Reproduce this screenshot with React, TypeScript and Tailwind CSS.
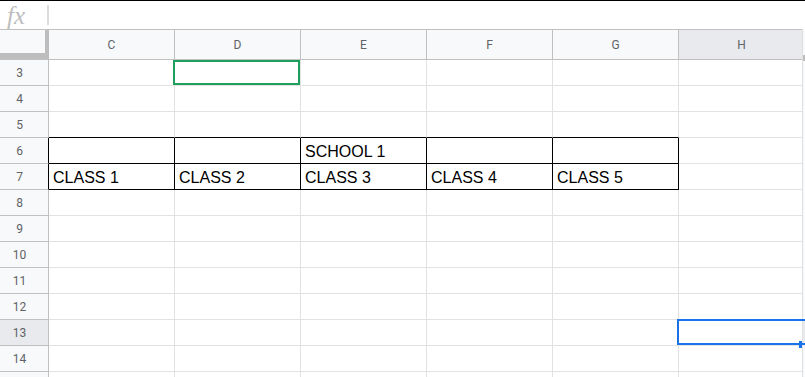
import React from "react";

const cols = ["C", "D", "E", "F", "G", "H"];
const rows = [3, 4, 5, 6, 7, 8, 9, 10, 11, 12, 13, 14, 15];
const tableCols = ["C", "D", "E", "F", "G"];

const cellText: Record<string, string> = {
  "E6": "SCHOOL 1",
  "C7": "CLASS 1",
  "D7": "CLASS 2",
  "E7": "CLASS 3",
  "F7": "CLASS 4",
  "G7": "CLASS 5",
};

const headerFont = { fontFamily: "Roboto, 'Noto Sans', Arial, sans-serif" };
const cellFont = { fontFamily: "'Liberation Sans', Arial, sans-serif" };

function BodyCell({ col, row }: { col: string; row: number }) {
  const inTable = tableCols.includes(col);
  const blackRight = inTable && (row === 6 || row === 7);
  const blackBottom = inTable && (row === 5 || row === 6 || row === 7);
  const text = cellText[col + row];
  return (
    <div
      className={
        "w-[126px] h-full shrink-0 bg-white border-r border-b " +
        (blackRight ? "border-r-black " : "border-r-[#e2e2e2] ") +
        (blackBottom ? "border-b-black" : "border-b-[#e2e2e2]")
      }
    >
      {text ? (
        <div
          className="pl-[4px] pt-[2px] leading-[23px] text-[16px] text-black whitespace-nowrap"
          style={cellFont}
        >
          {text}
        </div>
      ) : null}
    </div>
  );
}

export default function App() {
  return (
    <div className="relative w-[805px] h-[377px] overflow-hidden bg-white">
      {/* formula bar */}
      <div className="h-[29px] border-t border-black flex items-center">
        <span
          className="ml-[7px] mt-[1px] text-[25px] italic leading-none text-[#bdbdbd] w-[31px]"
          style={{ fontFamily: "'Liberation Serif', 'DejaVu Serif', serif" }}
        >
          fx
        </span>
        <div className="ml-[9px] w-[2px] h-[20px] bg-[#dadce0]" />
      </div>

      {/* column header row */}
      <div className="flex h-[31px] border-t border-b border-[#c0c0c0]">
        <div className="w-[49px] h-full shrink-0 bg-[#f8f9fa] border-r-[4px] border-b-[6px] border-[#bdbdbd]" />
        {cols.map((c) => (
          <div
            key={c}
            className={
              "w-[126px] h-full shrink-0 flex items-center justify-center border-r border-[#c0c0c0] text-[12px] text-[#5f6368] " +
              (c === "H" ? "bg-[#e8eaed]" : "bg-[#f8f9fa]")
            }
            style={headerFont}
          >
            {c}
          </div>
        ))}
      </div>

      {/* body rows */}
      {rows.map((r) => (
        <div key={r} className="flex h-[26px]">
          <div
            className={
              "w-[49px] h-full shrink-0 flex items-center justify-center pr-[9px] border-r border-b border-b-[#c0c0c0] text-[12px] text-[#5f6368] " +
              (r === 6 || r === 7 ? "border-r-black " : "border-r-[#c0c0c0] ") +
              (r === 13 ? "bg-[#e8eaed]" : "bg-[#f8f9fa]")
            }
            style={headerFont}
          >
            {r < 15 ? r : ""}
          </div>
          {cols.map((c) => (
            <BodyCell key={c} col={c} row={r} />
          ))}
        </div>
      ))}

      {/* right scrollbar strip */}
      <div className="absolute right-0 top-[29px] bottom-0 w-[3px] bg-[#f8f9fa] border-l border-[#e0e0e0]">
        <div className="absolute left-0 right-0 top-[26px] h-[6px] bg-[#bdbdbd]" />
        <div className="absolute left-0 right-0 top-[291px] h-[26px] bg-[#e8eaed]" />
      </div>

      {/* green selection (D3) */}
      <div className="absolute left-[173px] top-[60px] w-[127px] h-[25px] border-2 border-[#1e9f5b]" />

      {/* blue selection (H13) */}
      <div className="absolute left-[677px] top-[319px] w-[130px] h-[26px] border-2 border-[#1a73e8]" />
      <div className="absolute left-[799px] top-[341px] w-[3px] h-[7px] bg-[#1a73e8]" />
    </div>
  );
}
